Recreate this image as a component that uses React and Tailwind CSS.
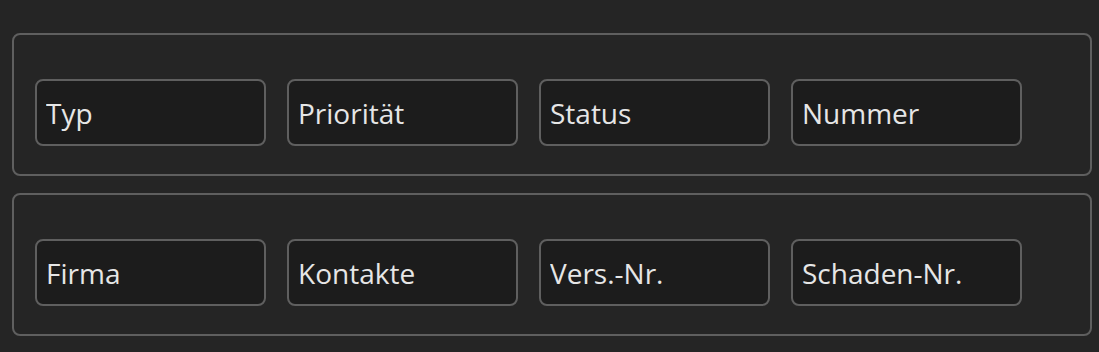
import React from 'react';

const ROWS = [
  ['Typ', 'Priorität', 'Status', 'Nummer'],
  ['Firma', 'Kontakte', 'Vers.-Nr.', 'Schaden-Nr.'],
];

function Field({ label }) {
  return (
    <input
      type="text"
      placeholder={label}
      className="w-[231px] h-[67px] rounded-lg border-2 border-[#5f5f5f] bg-[#1c1c1c] px-[9px] text-[28px] text-[#e6e6e6] placeholder:text-[#e6e6e6] outline-none"
      style={{ fontFamily: '"Open Sans", sans-serif' }}
    />
  );
}

export default function App() {
  return (
    <div className="min-h-[352px] w-full bg-[#252525] pl-3 pr-[7px] pt-[33px] pb-4 flex flex-col gap-[17px]">
      {ROWS.map((row, i) => (
        <div
          key={i}
          className="rounded-lg border-2 border-[#5f5f5f] pl-[21px] pt-[44px] pb-[28px] flex gap-[21px]"
        >
          {row.map((label) => (
            <Field key={label} label={label} />
          ))}
        </div>
      ))}
    </div>
  );
}
